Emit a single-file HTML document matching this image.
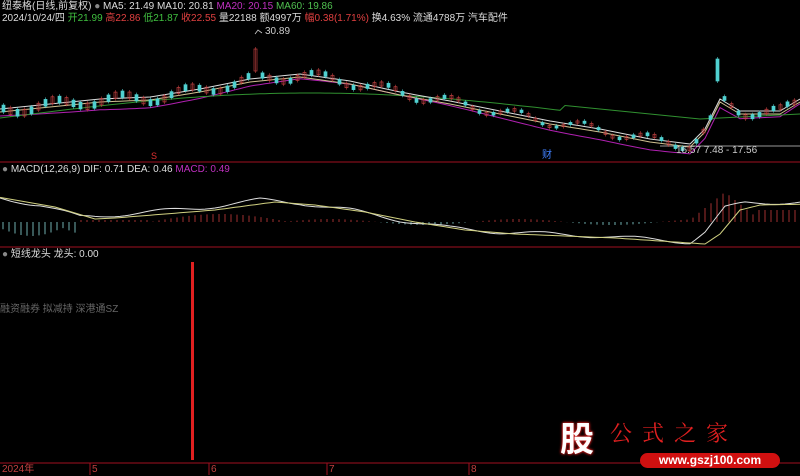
<!DOCTYPE html>
<html><head><meta charset="utf-8"><style>
html,body{margin:0;padding:0;background:#000;width:800px;height:475px;overflow:hidden;font-family:"Liberation Sans","Noto Sans CJK SC",sans-serif}
.t{position:absolute;font-size:10px;white-space:nowrap;line-height:12px}
</style></head><body>
<svg id="s" width="800" height="475" style="position:absolute;left:0;top:0">
<line x1="0" y1="162" x2="800" y2="162" stroke="#a01020" stroke-width="1"/>
<line x1="0" y1="247" x2="800" y2="247" stroke="#a01020" stroke-width="1"/>
<line x1="0" y1="463" x2="800" y2="463" stroke="#a01020" stroke-width="1"/>
<line x1="90" y1="463" x2="90" y2="475" stroke="#a01020"/>
<line x1="209" y1="463" x2="209" y2="475" stroke="#a01020"/>
<line x1="327" y1="463" x2="327" y2="475" stroke="#a01020"/>
<line x1="469" y1="463" x2="469" y2="475" stroke="#a01020"/>
<rect x="191" y="262" width="3" height="198" fill="#e02020"/>
<line x1="660" y1="146" x2="800" y2="146" stroke="#ccc" stroke-width="0.7"/>
<polyline points="255,34 258,30 262,33" fill="none" stroke="#ccc" stroke-width="0.8"/>
<g id="g"></g>
</svg>
<div class="t" style="left:2px;top:1px;color:#ddd">纽泰格(日线,前复权) <span style="color:#888">●</span> MA5: 21.49 <span>MA10: 20.81</span> <span style="color:#c030c0">MA20: 20.15</span> <span style="color:#50c050">MA60: 19.86</span></div>
<div class="t" style="left:2px;top:13px;color:#ddd">2024/10/24/四 <span style="color:#40c040">开21.99</span> <span style="color:#e04040">高22.86</span> <span style="color:#40c040">低21.87</span> <span style="color:#e04040">收22.55</span> <span style="color:#ddd">量22188</span> 额4997万 <span style="color:#e04040">幅0.38(1.71%)</span> 换4.63% 流通4788万 汽车配件</div>
<div class="t" style="left:265px;top:26px;color:#ccc">30.89</div>
<div class="t" style="left:676px;top:145px;color:#ccc">16.57 7.48 - 17.56</div>
<div class="t" style="left:151px;top:150px;color:#e03030;font-size:9px">S</div>
<div class="t" style="left:542px;top:150px;color:#4080ff;font-size:10px">财</div>
<div class="t" style="left:2px;top:164px;color:#ddd"><span style="color:#888">●</span> MACD(12,26,9) DIF: 0.71 <span>DEA: 0.46</span> <span style="color:#c030c0">MACD: 0.49</span></div>
<div class="t" style="left:2px;top:249px;color:#ddd"><span style="color:#888">●</span> 短线龙头 龙头: 0.00</div>
<div class="t" style="left:0;top:304px;color:#666">融资融券 拟减持 深港通SZ</div>
<div class="t" style="left:2px;top:464px;color:#c04040">2024年</div>
<div class="t" style="left:92px;top:464px;color:#c04040">5</div>
<div class="t" style="left:211px;top:464px;color:#c04040">6</div>
<div class="t" style="left:329px;top:464px;color:#c04040">7</div>
<div class="t" style="left:471px;top:464px;color:#c04040">8</div>
<div class="t" style="left:560px;top:420px;font-size:34px;line-height:40px;font-weight:bold;color:#fff;text-shadow:0 0 3px #e02020,0 0 2px #e02020">股</div>
<div class="t" style="left:610px;top:420px;font-size:22px;line-height:26px;color:#e02020;letter-spacing:10px;font-family:'Noto Serif CJK SC',serif">公式之家</div>
<div style="position:absolute;left:640px;top:453px;width:140px;height:15px;border-radius:8px;background:#d01010;color:#fff;font-size:12px;font-weight:bold;text-align:center;line-height:15px">www.gszj100.com</div>
<script>
var g=document.getElementById('g'),h='';
var P=[[0,110],[50,105],[100,100],[150,98],[200,90],[250,80],[300,75],[350,82],[400,93],[450,102],[500,112],[550,122],[600,130],[650,140],[690,145],[705,130],[720,100],[740,112],[780,112],[800,100]];
function f(x){for(var i=1;i<P.length;i++)if(x<=P[i][0]){var a=P[i-1],b=P[i];return a[1]+(b[1]-a[1])*(x-a[0])/(b[0]-a[0]);}return 100;}
function poly(fn,c){var p='';for(var x=0;x<=800;x+=5)p+=x+','+fn(x).toFixed(1)+' ';h+='<polyline points="'+p+'" fill="none" stroke="'+c+'" stroke-width="1"/>';}
poly(function(x){return f(x)+6+4*Math.sin(x/80)},'#b020b0');
poly(function(x){var v=118-25*Math.sin(Math.min(x,560)/560*Math.PI*0.9);if(x>560)v=105+(x-560)*0.1;if(x>700)v=119-(x-700)*0.05;return v},'#309030');
poly(function(x){return f(x)+2},'#d0c090');
poly(function(x){return f(x)-1},'#ddd');
for(var x=2;x<800;x+=7){var y=f(x)+Math.sin(x*1.7)*5,up=Math.sin(x*3.1)>0,hh=2+Math.abs(Math.sin(x*0.9))*5;
if(x>=251&&x<=258){y=60;hh=22;up=true;}if(x>=716&&x<=722){y=70;hh=22;up=false;}
var c=up?'#c04040':'#50d0d0';h+='<line x1="'+(x+1.5)+'" y1="'+(y-hh/2-2)+'" x2="'+(x+1.5)+'" y2="'+(y+hh/2+2)+'" stroke="'+c+'" stroke-width="0.6"/>';
h+='<rect x="'+x+'" y="'+(y-hh/2)+'" width="3" height="'+hh+'" fill="'+(up?'none':c)+'" stroke="'+c+'" stroke-width="0.7"/>';}
var D=[[0,198],[40,205],[80,217],[100,216],[150,212],[200,208],[260,200],[300,203],[350,210],[400,220],[450,228],[500,232],[600,236],[690,242],[705,232],[725,208],[745,203],[800,202]];
function d(x){for(var i=1;i<D.length;i++)if(x<=D[i][0]){var a=D[i-1],b=D[i];return a[1]+(b[1]-a[1])*(x-a[0])/(b[0]-a[0]);}return 205;}
for(var x=3;x<800;x+=6){var hv;if(x<80)hv=6+Math.abs(Math.sin(x/20))*8;else if(x<150)hv=-2;else if(x<290)hv=-8*Math.sin((x-150)/140*Math.PI);else if(x<690)hv=3*Math.sin(x/30);else hv=-(30-Math.abs(x-725)*0.8);
if(x>=695&&hv>-6)hv=-12;var c=hv>0?'#70b0b0':'#a03030';h+='<line x1="'+x+'" y1="222" x2="'+x+'" y2="'+(222+hv)+'" stroke="'+c+'" stroke-width="1"/>';}
var p1='',p2='';for(var x=0;x<=800;x+=5){p1+=x+','+(d(x)+2*Math.sin(x/15)).toFixed(1)+' ';p2+=x+','+(d(x-15)+2).toFixed(1)+' ';}
h+='<polyline points="'+p1+'" fill="none" stroke="#ddd" stroke-width="1"/><polyline points="'+p2+'" fill="none" stroke="#d0d080" stroke-width="1"/>';
g.innerHTML=h;
</script>
</body></html>
